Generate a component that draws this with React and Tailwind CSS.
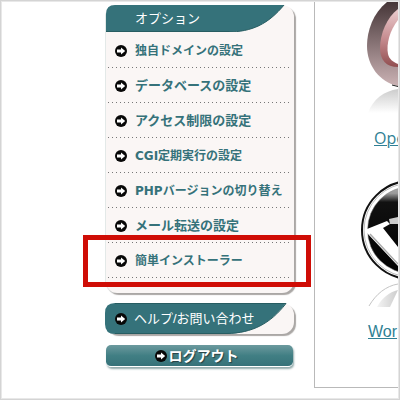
const options = [
  { label: "独自ドメインの設定", size: "text-xs" },
  { label: "データベースの設定", size: "text-[13px]" },
  { label: "アクセス制限の設定", size: "text-[13px]" },
  { label: "CGI定期実行の設定", size: "text-xs" },
  { label: "PHPバージョンの切り替え", size: "text-xs" },
  { label: "メール転送の設定", size: "text-[13px]" },
  { label: "簡単インストーラー", size: "text-xs", highlighted: true },
];

function ArrowIcon() {
  return (
    <svg viewBox="0 0 12 12" className="size-3 shrink-0" aria-hidden="true">
      <circle cx="6" cy="6" r="6" fill="#080808" />
      <path d="M2 4.5h4V2.4L10.2 6 6 9.6V7.5H2z" fill="#fff" />
    </svg>
  );
}

function OptionItem({ label, size, highlighted }) {
  return (
    <li className="relative h-[35px] bg-[linear-gradient(90deg,#777_1px,transparent_1px)] bg-[length:4px_1px] bg-bottom-left bg-repeat-x">
      <a
        href="#"
        className={`flex h-[35px] items-center gap-2 pt-px pl-[7px] font-['DejaVu_Sans','Noto_Sans_CJK_JP',sans-serif] font-bold whitespace-nowrap text-[#35727a] ${size}`}
      >
        <ArrowIcon />
        {label}
      </a>
      {highlighted ? (
        <span className="pointer-events-none absolute -top-2 -right-[21px] -bottom-[9px] -left-[25px] border-[5px] border-[#cf0d06]" />
      ) : null}
    </li>
  );
}

function OptionPanel() {
  return (
    <nav className="rounded-xl border-l border-[#e3e9e8] bg-[#faf6f5] pb-[15px] shadow-[2px_2px_1px_#aaa7a5]">
      <h2 className="grid h-[27px] items-center text-[13px] text-white">
        <svg viewBox="0 0 189 27" preserveAspectRatio="none" className="h-[27px] w-full [grid-area:1/1]" aria-hidden="true">
          <path d="M0 27V9Q0 0 9 0H179C163 19 147 27 122 27Z" fill="#35727a" />
          <path d="M179 0C163 19 147 27 122 27" fill="none" stroke="#275d62" />
          <path d="M0 26.5H124" stroke="#275d62" />
        </svg>
        <span className="pl-[29px] [grid-area:1/1]">オプション</span>
      </h2>
      <ul className="mt-px mr-1 ml-[2px]">
        {options.map((option) => (
          <OptionItem key={option.label} {...option} />
        ))}
      </ul>
    </nav>
  );
}

function HelpLink() {
  return (
    <a href="#" className="mt-[10px] grid h-[31px] items-center rounded-xl bg-[#faf6f5] text-[13px] text-white shadow-[2px_2px_1px_#aaa7a5]">
      <svg viewBox="0 0 189 31" preserveAspectRatio="none" className="h-[31px] w-full [grid-area:1/1]" aria-hidden="true">
        <path d="M0 10Q0 0 10 0H181C165 21 147 30 122 31H10Q0 31 0 21Z" fill="#35727a" />
        <path d="M10 .5H181C165 21 147 30 122 30.5H10" fill="none" stroke="#275d62" />
      </svg>
      <span className="flex items-center gap-[7px] pl-[10px] whitespace-nowrap [grid-area:1/1]">
        <ArrowIcon />
        ヘルプ/お問い合わせ
      </span>
    </a>
  );
}

function LogoutButton() {
  return (
    <button
      type="button"
      className="mt-[11px] ml-px flex h-[22px] w-[187px] items-center justify-center gap-[2px] rounded-[5px] border-b border-white bg-linear-to-b from-[#6c9a9e] via-[#417f84] to-[#367279] pr-[6px] text-sm font-bold text-white shadow-[1px_2px_2px_#92aaab]"
    >
      <ArrowIcon />
      <span className="[text-shadow:1px_1px_1px_#263f42]">ログアウト</span>
    </button>
  );
}

function RingLogo() {
  return (
    <svg viewBox="0 0 33 112" className="ml-auto h-28 w-[33px]" aria-hidden="true">
      <defs>
        <linearGradient id="ring" x1="0" y1="0" x2="0" y2="1">
          <stop offset="0" stopColor="#463638" />
          <stop offset=".5" stopColor="#887476" />
          <stop offset="1" stopColor="#cbb2b4" />
        </linearGradient>
        <linearGradient id="ringInner" x1="0" y1="0" x2="0" y2="1">
          <stop offset="0" stopColor="#ebcdcf" />
          <stop offset=".5" stopColor="#c78d91" />
          <stop offset="1" stopColor="#914e50" />
        </linearGradient>
        <linearGradient id="ringMirror" x1="0" y1="0" x2="0" y2="1">
          <stop offset="0" stopColor="#ccc" />
          <stop offset="1" stopColor="#fff" />
        </linearGradient>
      </defs>
      <path d="M22 0C8 11 2 29 2 44C2 63 14 80 33 84V0Z" fill="url(#ring)" />
      <path d="M33 7C22 15 15 32 15 46C15 58 21 65 33 65Z" fill="url(#ringInner)" />
      <path d="M33 18C25 28 21 42 23 52C24 57 28 60 33 62Z" fill="#fff" />
      <path d="M27 83L33 84.5" stroke="#222" />
      <path d="M33 87C19 89 8 97 3 111H33Z" fill="url(#ringMirror)" />
    </svg>
  );
}

function WheelLogo() {
  return (
    <svg viewBox="0 0 40 130" className="ml-auto h-[130px] w-10" aria-hidden="true">
      <defs>
        <linearGradient id="wheelShine" x1="0" y1="0" x2="0" y2="1">
          <stop offset="0" stopColor="#aaa" />
          <stop offset=".08" stopColor="#999" />
          <stop offset=".18" stopColor="#111" />
          <stop offset="1" stopColor="#000" />
        </linearGradient>
        <linearGradient id="wheelMirror" x1="0" y1="0" x2="1" y2="0">
          <stop offset="0" stopColor="#f4f4f4" />
          <stop offset="1" stopColor="#ccc" />
        </linearGradient>
      </defs>
      <circle cx="53" cy="50" r="49" fill="#fff" stroke="#111" strokeWidth="2" />
      <circle cx="53" cy="50" r="47" fill="none" stroke="#bbb" />
      <circle cx="53" cy="50" r="43.5" fill="url(#wheelShine)" stroke="#888" strokeWidth=".5" />
      <path d="M9 49L29 41L32 44L25 48L40 67V86L9 53Z" fill="#fff" />
      <path d="M12 54L40 84" stroke="#aaa" strokeWidth="1.5" />
      <path d="M31 39L40 37V44L32 44Z" fill="#ccc" />
      <path d="M11 126C18 114 28 106 40 104" fill="none" stroke="#c4c4c4" />
      <path d="M19 127C24 118 31 112 40 110L32 127Z" fill="url(#wheelMirror)" />
    </svg>
  );
}

export default function App() {
  return (
    <div className="border border-[#d4d4d4] bg-white font-['Liberation_Sans','Noto_Sans_CJK_JP',sans-serif]">
      <div className="flex min-h-[calc(100vh-2px)] overflow-hidden border border-[#e8e8e8]">
        <aside className="ml-[103px] w-[189px] shrink-0 pt-[3px]">
          <OptionPanel />
          <HelpLink />
          <LogoutButton />
        </aside>
        <main className="mb-[10px] ml-5 flex min-w-0 flex-1 flex-col overflow-hidden border-b border-l border-[#b9b9b9]">
          <RingLogo />
          <a
            href="#"
            className="mt-3 ml-[59px] h-6 font-['Open_Sans','Noto_Sans_CJK_JP',sans-serif] text-base leading-6 text-[#2f7f94] underline decoration-1"
          >
            Ope
          </a>
          <span className="mt-[30px]">
            <WheelLogo />
          </span>
          <a href="#" className="mt-[10px] ml-[53px] h-6 text-base leading-6 text-[#2f7f94] underline decoration-1">
            Wor
          </a>
        </main>
      </div>
    </div>
  );
}
